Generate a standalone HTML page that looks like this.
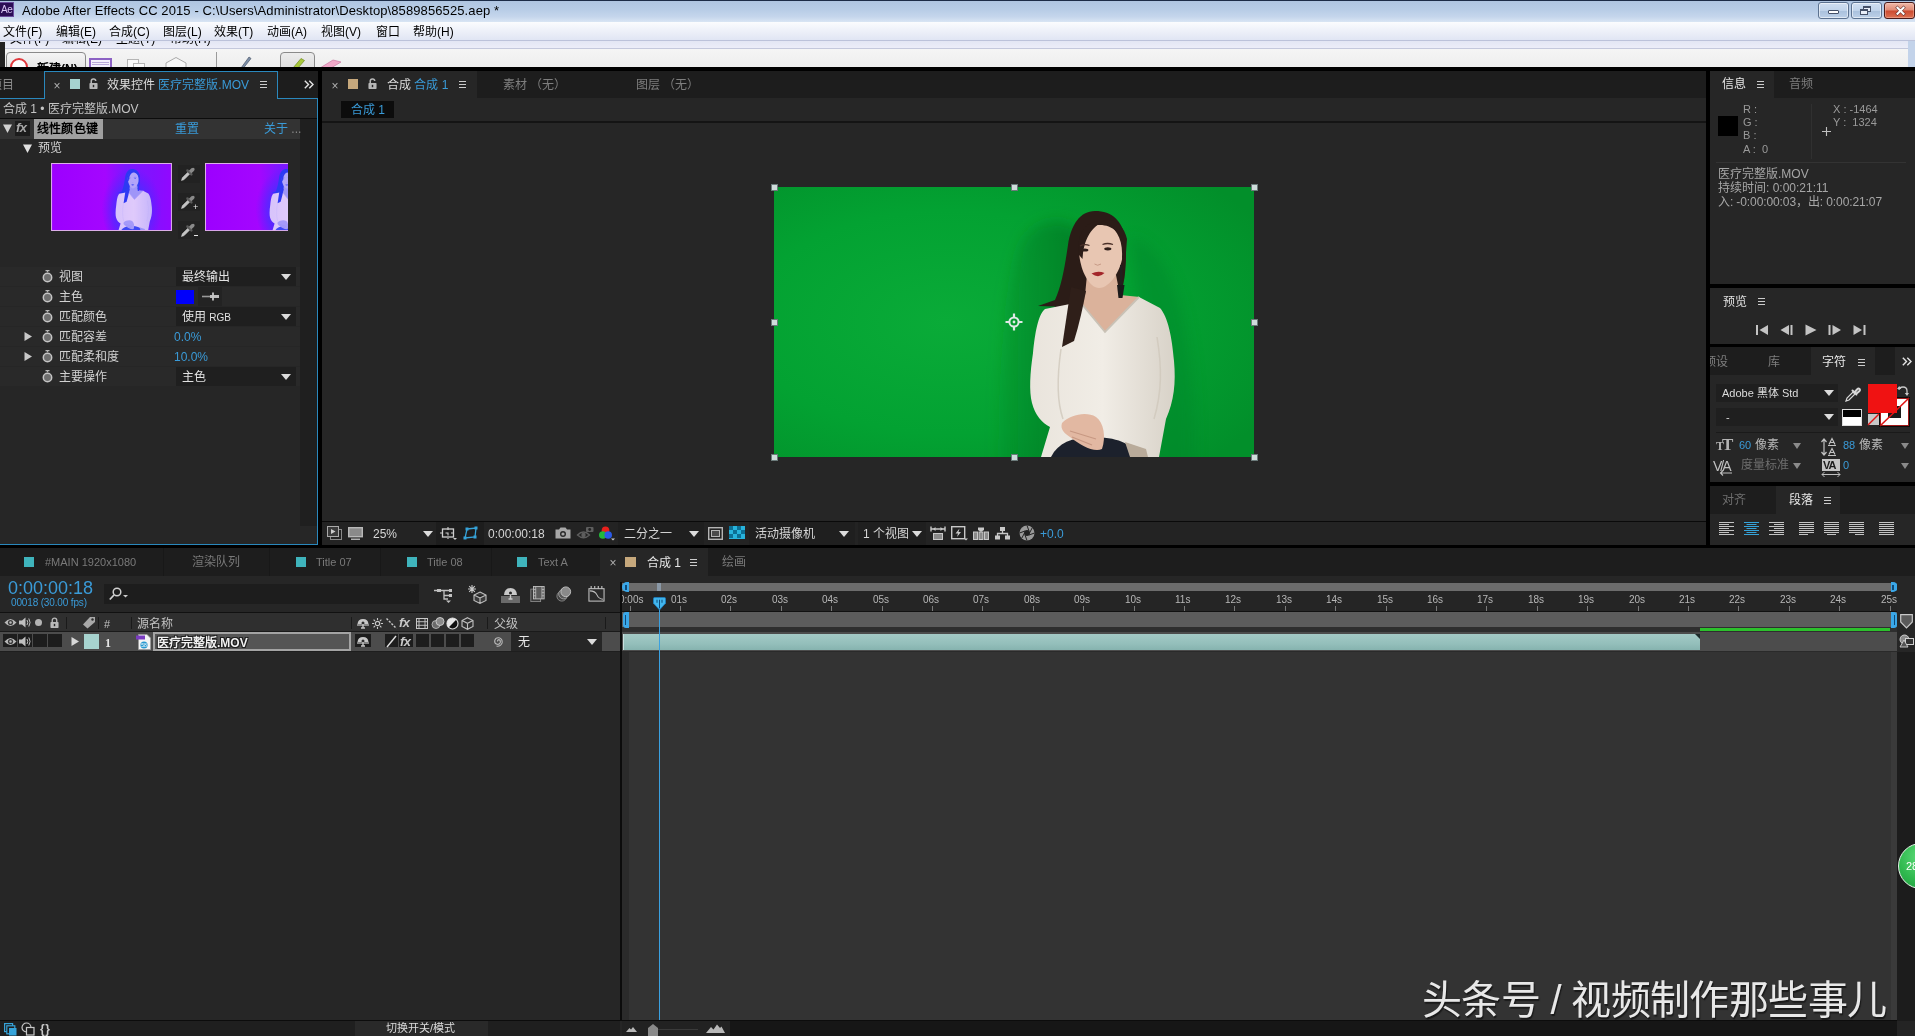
<!DOCTYPE html>
<html lang="zh-CN">
<head>
<meta charset="utf-8">
<title>AE</title>
<style>
*{box-sizing:border-box;margin:0;padding:0}
html,body{width:1915px;height:1036px;overflow:hidden;background:#000}
body{position:relative;will-change:transform;font-family:"Liberation Sans",sans-serif;font-size:12px;color:#c8c8c8;line-height:1}
.a{position:absolute}
.t{position:absolute;white-space:nowrap;line-height:14px;height:14px}
.blue{color:#2d8ceb}
.lb{color:#3d9bd8}
svg{position:absolute;overflow:visible}
/* ---------- window chrome ---------- */
#title{left:0;top:0;width:1915px;height:22px;background:linear-gradient(#afc5e1 0,#b7cce6 40%,#c5d6ec 75%,#d9e5f4 100%);border-top:1px solid #1c2c47}
#menu{left:0;top:22px;width:1915px;height:19px;background:linear-gradient(#fbfcfe 0,#eef1f9 45%,#dfe4f3 100%);color:#000}
#tool{left:0;top:41px;width:1915px;height:26px;background:#f0f0f0}
#menu .t{top:3px;color:#000;font-size:12px}
/* ---------- panels ---------- */
.panel{background:#262626}
.tabbar{background:#1d1d1d}
</style>
</head>
<body>
<!-- TITLE BAR -->
<div id="title" class="a"></div>
<div id="menu" class="a"></div>
<div id="tool" class="a"></div>

<!-- title contents -->
<div class="a" style="left:0;top:2px;width:14px;height:15px;background:#2b0e55;border:1px solid #6a4c9c;border-left:0"></div>
<div class="t" style="left:1px;top:3px;font-size:10px;color:#d9c8f5;letter-spacing:-0.5px;line-height:13px">Ae</div>
<div class="t" id="ttl" style="left:22px;top:3px;font-size:13px;color:#000;line-height:15px;letter-spacing:0.1px">Adobe After Effects CC 2015 - C:\Users\Administrator\Desktop\8589856525.aep *</div>
<!-- window buttons -->
<div class="a" style="left:1818px;top:2px;width:31px;height:17px;border:1px solid #5c7290;border-radius:3px;box-shadow:inset 0 0 0 1px rgba(255,255,255,.55);background:linear-gradient(#d0dff2 0,#c0d3ea 50%,#a9c0dc 51%,#bcd0e8 100%)"></div>
<div class="a" style="left:1828px;top:10px;width:11px;height:4px;background:#fff;border:1px solid #445068;border-radius:1px"></div>
<div class="a" style="left:1851px;top:2px;width:31px;height:17px;border:1px solid #5c7290;border-radius:3px;box-shadow:inset 0 0 0 1px rgba(255,255,255,.55);background:linear-gradient(#d0dff2 0,#c0d3ea 50%,#a9c0dc 51%,#bcd0e8 100%)"></div>
<div class="a" style="left:1863px;top:6px;width:8px;height:6px;border:1px solid #445068;border-top-width:2px;background:#e8eef8"></div>
<div class="a" style="left:1860px;top:9px;width:8px;height:6px;border:1px solid #445068;border-top-width:2px;background:#e8eef8"></div>
<div class="a" style="left:1884px;top:2px;width:31px;height:17px;border:1px solid #4a1a18;border-radius:3px;box-shadow:inset 0 0 0 1px rgba(255,220,210,.35);background:linear-gradient(#f0b8a8 0,#e08a74 48%,#cc4a30 52%,#dc7052 100%)"></div>
<svg style="left:1896px;top:7px" width="9" height="7.500" viewBox="0 0 12 10"><path d="M2 1 L10 9 M10 1 L2 9" stroke="#5a2a28" stroke-width="4.200" stroke-linecap="square"/><path d="M2 1 L10 9 M10 1 L2 9" stroke="#fff" stroke-width="2.800" stroke-linecap="square"/></svg>
<!-- menu -->
<div id="mi">
<div class="t" style="left:3px;top:25px;color:#000">文件(F)</div>
<div class="t" style="left:56px;top:25px;color:#000">编辑(E)</div>
<div class="t" style="left:109px;top:25px;color:#000">合成(C)</div>
<div class="t" style="left:163px;top:25px;color:#000">图层(L)</div>
<div class="t" style="left:214px;top:25px;color:#000">效果(T)</div>
<div class="t" style="left:267px;top:25px;color:#000">动画(A)</div>
<div class="t" style="left:321px;top:25px;color:#000">视图(V)</div>
<div class="t" style="left:376px;top:25px;color:#000">窗口</div>
<div class="t" style="left:413px;top:25px;color:#000">帮助(H)</div>
</div>
<!-- toolbar strip -->
<div class="a" style="left:0;top:40px;width:1915px;height:1px;background:#bcc2da"></div><div class="a" style="left:0;top:41px;width:1915px;height:7px;background:linear-gradient(#e3e6f4,#ecedf8)"></div>
<div class="a" style="left:0;top:48px;width:1915px;height:1px;background:#c4c8dc"></div>
<div class="a" style="left:0;top:49px;width:1915px;height:18px;background:linear-gradient(#f5f5f5,#eeeeee)"></div>
<div class="a" style="left:1908px;top:41px;width:7px;height:26px;background:#c3d3ea"></div>
<div class="a" style="left:0;top:42px;width:5px;height:25px;background:#222"></div>
<!-- clipped text remnants -->
<div class="a" style="left:0;top:41px;width:260px;height:5px;overflow:hidden"><div class="t" style="left:10px;top:-9px;color:#000">文件(F)</div><div class="t" style="left:62px;top:-9px;color:#000">编辑(E)</div><div class="t" style="left:116px;top:-9px;color:#000">主题(T)</div><div class="t" style="left:170px;top:-9px;color:#000">帮助(H)</div></div>
<div class="a" style="left:6px;top:52px;width:80px;height:20px;border:1px solid #8a8a8a;border-radius:4px;background:linear-gradient(#f4f4f4,#e2e2e2)"></div>
<div class="a" style="left:10px;top:58px;width:18px;height:18px;border:2px solid #e0393d;border-radius:50%;background:#fff"></div>
<div class="a" style="left:0;top:62px;width:90px;height:5px;overflow:hidden"><div class="t" style="left:37px;top:0px;color:#000;font-weight:bold">新建(N)</div></div>
<div class="a" style="left:89px;top:58px;width:23px;height:12px;border:2px solid #8c62c4;background:#f3f0fb"></div>
<div class="a" style="left:92px;top:62px;width:17px;height:1px;background:#b9a9d9"></div>
<div class="a" style="left:92px;top:64px;width:17px;height:1px;background:#b9a9d9"></div>
<div class="a" style="left:127px;top:59px;width:12px;height:10px;border:1px solid #b5b5b5;background:#fafafa"></div>
<div class="a" style="left:133px;top:63px;width:12px;height:10px;border:1px solid #b5b5b5;background:#fafafa"></div>
<svg style="left:165px;top:57px" width="22" height="12" viewBox="0 0 22 12"><path d="M1 11 L1 6 L11 0.5 L21 6 L21 11" fill="#f7f7f7" stroke="#aaa" stroke-width="1"/></svg>
<div class="a" style="left:216px;top:52px;width:1px;height:15px;background:#9a9a9a"></div>
<svg style="left:240px;top:56px" width="12" height="12" viewBox="0 0 12 12"><path d="M1 12 L9 1 L11 2.5 L3.5 12 Z" fill="#7d8fa8" stroke="#4a5668" stroke-width="0.7"/></svg>
<div class="a" style="left:280px;top:52px;width:35px;height:20px;border:1px solid #8a8a8a;border-radius:4px;background:linear-gradient(#ececec,#dcdcdc)"></div>
<svg style="left:292px;top:58px" width="14" height="10" viewBox="0 0 14 10"><path d="M1 10 L9 0.5 L12.5 2.5 L6 10 Z" fill="#a8c83c" stroke="#6e8a20" stroke-width="0.7"/></svg>
<svg style="left:319px;top:59px" width="24" height="9" viewBox="0 0 24 9"><path d="M1 9 L14 1 L22 3 L12 9 Z" fill="#f0a8c8" stroke="#c878a0" stroke-width="0.7"/></svg>
<div class="a" style="left:0;top:67px;width:1915px;height:3px;background:#000"></div>
<!--CHROME-->
<!-- LEFT PANEL (effect controls) -->
<div id="left" class="a panel" style="left:0;top:70px;width:318px;height:475px"></div>

<svg width="0" height="0" style="left:0;top:0"><defs>
<symbol id="sw" viewBox="0 0 11 13"><path d="M3.5 0.6 H7.5 M5.5 0.6 V2.2" stroke="#b4b4b4" stroke-width="1.2" fill="none"/><circle cx="5.5" cy="7.5" r="4.2" fill="#6e6e6e" stroke="#c4c4c4" stroke-width="1.5"/></symbol>
<symbol id="lock" viewBox="0 0 10 12"><path d="M2.5 6 V3.6 A2.5 2.5 0 0 1 7.5 3.2" fill="none" stroke="#b8b8b8" stroke-width="1.7"/><rect x="0.5" y="5.5" width="9" height="6.5" rx="0.8" fill="#b8b8b8"/><rect x="4.2" y="7.5" width="1.6" height="2.6" fill="#262626"/></symbol>
<symbol id="drop" viewBox="0 0 22 18"><rect width="22" height="18" fill="#222"/><path d="M3.500 15.500 L4.300 12.800 L10.200 6.900 L12 8.700 L6.100 14.600 Z" fill="#c4c4c4" stroke="#e0e0e0" stroke-width="0.500"/><path d="M9.400 5.400 L13.400 9.400" stroke="#5a5a5a" stroke-width="2.400" fill="none" stroke-linecap="round"/><path d="M11.600 6.400 L14 4 Q15.200 3.200 15.700 4 Q16 4.800 15 5.600 L12.800 7.600" fill="#808080" stroke="#8a8a8a" stroke-width="1.800" stroke-linejoin="round"/></symbol>
</defs></svg>
<!-- left panel frame -->
<div class="a tabbar" style="left:0;top:70px;width:318px;height:28px"></div>
<div class="a" style="left:0;top:98px;width:318px;height:447px;border:1px solid #2a88bd;border-left:0"></div>
<div class="a" style="left:44px;top:71px;width:234px;height:28px;background:#262626;border:1px solid #2a88bd;border-bottom:0"></div>
<div class="t" style="left:-10px;top:78px;color:#8a8a8a;font-size:12px">项目</div>
<div class="t" style="left:52px;top:79px;color:#b0b0b0;font-size:12px;width:10px;text-align:center">×</div>
<div class="a" style="left:70px;top:79px;width:10px;height:10px;background:#a6d3d0"></div>
<svg style="left:89px;top:78px" width="9" height="11"><use href="#lock"/></svg>
<div class="t" style="left:107px;top:78px;color:#dcdcdc">效果控件 <span style="color:#3a9bd8">医疗完整版.MOV</span></div>
<div class="a" style="left:260px;top:81px;width:7px;height:7px;border-top:1px solid #ccc;border-bottom:1px solid #ccc"></div><div class="a" style="left:260px;top:84px;width:7px;height:1px;background:#ccc"></div>
<svg style="left:304px;top:80px" width="10" height="9" viewBox="0 0 10 9"><path d="M0.8 0.8 L4.5 4.5 L0.8 8.2 M5.3 0.8 L9 4.5 L5.3 8.2" fill="none" stroke="#e4e4e4" stroke-width="1.4"/></svg>
<!-- breadcrumb -->
<div class="t" style="left:3px;top:102px;color:#c4c4c4">合成 1 • 医疗完整版.MOV</div>
<div class="a" style="left:0;top:118px;width:317px;height:1px;background:#0c0c0c"></div>
<!-- scrollbar column -->
<div class="a" style="left:300px;top:119px;width:17px;height:407px;background:#1f1f1f"></div>
<!-- effect row -->
<div class="a" style="left:0;top:119px;width:300px;height:20px;background:#333"></div>
<svg style="left:3px;top:124px" width="9" height="9" viewBox="0 0 9 9"><path d="M0 0.5 H9 L4.5 9 Z" fill="#d2d2d2"/></svg>
<div class="a" style="left:15px;top:121px;width:15px;height:15px;background:#1c1c1c"></div>
<div class="t" style="left:16px;top:121px;font-style:italic;font-weight:bold;font-size:13px;color:#a8a8a8;letter-spacing:-0.5px">fx</div>
<div class="a" style="left:34px;top:119px;width:69px;height:20px;background:#a0a0a0"></div>
<div class="t" style="left:37px;top:122px;color:#000;font-weight:bold;letter-spacing:0.2px">线性颜色键</div>
<div class="t" style="left:175px;top:122px;color:#3a9bd8">重置</div>
<div class="t" style="left:264px;top:122px;color:#3a9bd8">关于<span style="color:#888"> ...</span></div>
<!-- preview row -->
<svg style="left:23px;top:144px" width="9" height="9" viewBox="0 0 9 9"><path d="M0 0.5 H9 L4.5 9 Z" fill="#e0e0e0"/></svg>
<div class="t" style="left:38px;top:141px;color:#d6d6d6">预览</div>

<svg style="left:51px;top:163px;overflow:hidden" width="121" height="68" viewBox="0 0 480 270"><defs>
<filter id="purp" color-interpolation-filters="sRGB" x="0" y="0" width="1" height="1"><feColorMatrix type="matrix" values="0 0 0.86 0 0.1  0 0 0.7 0 0.16  0 0 0.04 0 0.95  0 0 0 1 0"/></filter>
<linearGradient id="pbg" x1="0" x2="1"><stop offset="0" stop-color="#9c00ff"/><stop offset="0.450" stop-color="#a406ff"/><stop offset="0.620" stop-color="#7a18ff"/><stop offset="0.850" stop-color="#8410ff"/><stop offset="1" stop-color="#9208ff"/></linearGradient>
<radialGradient id="pbl" cx="0.500" cy="0.550" r="0.500"><stop offset="0" stop-color="#3a34ff" stop-opacity="0.950"/><stop offset="0.600" stop-color="#4a2cff" stop-opacity="0.700"/><stop offset="1" stop-color="#5a20ff" stop-opacity="0"/></radialGradient>
<g id="thumb"><rect width="480" height="270" fill="url(#pbg)"/><ellipse cx="320" cy="170" rx="120" ry="170" fill="url(#pbl)"/><use href="#woman" filter="url(#purp)"/><rect x="2" y="2" width="476" height="266" fill="none" stroke="#dcaee8" stroke-width="4"/></g></defs><use href="#thumb"/></svg>
<svg style="left:205px;top:163px;overflow:hidden" width="83" height="68" viewBox="0 0 329.260 270" preserveAspectRatio="xMinYMin slice"><use href="#thumb"/></svg>

<svg style="left:178px;top:165px" width="22" height="18"><use href="#drop"/></svg>
<svg style="left:178px;top:193px" width="22" height="18"><use href="#drop"/></svg>
<svg style="left:178px;top:221px" width="22" height="18"><use href="#drop"/></svg>
<div class="t" style="left:193px;top:200px;font-size:9px;color:#e8e8e8">+</div>
<div class="a" style="left:194px;top:235px;width:4px;height:1px;background:#e8e8e8"></div>
<!-- property rows -->
<div class="a" style="left:0;top:267px;width:300px;height:19px;background:#292929"></div><svg style="left:42px;top:270px" width="11" height="13"><use href="#sw"/></svg><div class="t" style="left:59px;top:270px;color:#d2d2d2">视图</div><div class="a" style="left:176px;top:267px;width:120px;height:19px;background:#1f1f1f"></div><div class="t" style="left:182px;top:270px;color:#e2e2e2">最终输出</div><svg style="left:281px;top:274px" width="10" height="6" viewBox="0 0 10 6"><path d="M0 0 H10 L5 6 Z" fill="#dcdcdc"/></svg><div class="a" style="left:0;top:287px;width:300px;height:19px;background:#292929"></div><svg style="left:42px;top:290px" width="11" height="13"><use href="#sw"/></svg><div class="t" style="left:59px;top:290px;color:#d2d2d2">主色</div><div class="a" style="left:176px;top:290px;width:18px;height:14px;background:#0000fb"></div><div class="a" style="left:198px;top:287px;width:24px;height:19px;background:#232323"></div><svg style="left:202px;top:292px" width="18" height="9" viewBox="0 0 18 9"><path d="M0 4.5 H9" stroke="#9a9a9a" stroke-width="1.6"/><path d="M8 4.5 H17" stroke="#c0c0c0" stroke-width="3"/><path d="M11 0.5 V8.5" stroke="#c8c8c8" stroke-width="1.8"/></svg><div class="a" style="left:0;top:307px;width:300px;height:19px;background:#292929"></div><svg style="left:42px;top:310px" width="11" height="13"><use href="#sw"/></svg><div class="t" style="left:59px;top:310px;color:#d2d2d2">匹配颜色</div><div class="a" style="left:176px;top:307px;width:120px;height:19px;background:#1f1f1f"></div><div class="t" style="left:182px;top:310px;color:#e2e2e2">使用 <span style="font-size:10px">RGB</span></div><svg style="left:281px;top:314px" width="10" height="6" viewBox="0 0 10 6"><path d="M0 0 H10 L5 6 Z" fill="#dcdcdc"/></svg><div class="a" style="left:0;top:327px;width:300px;height:19px;background:#292929"></div><svg style="left:24px;top:332px" width="8" height="9" viewBox="0 0 8 9"><path d="M0.5 0 V9 L8 4.5 Z" fill="#c8c8c8"/></svg><svg style="left:42px;top:330px" width="11" height="13"><use href="#sw"/></svg><div class="t" style="left:59px;top:330px;color:#d2d2d2">匹配容差</div><div class="t" style="left:174px;top:330px;color:#3a9bd8">0.0%</div><div class="a" style="left:0;top:347px;width:300px;height:19px;background:#292929"></div><svg style="left:24px;top:352px" width="8" height="9" viewBox="0 0 8 9"><path d="M0.5 0 V9 L8 4.5 Z" fill="#c8c8c8"/></svg><svg style="left:42px;top:350px" width="11" height="13"><use href="#sw"/></svg><div class="t" style="left:59px;top:350px;color:#d2d2d2">匹配柔和度</div><div class="t" style="left:174px;top:350px;color:#3a9bd8">10.0%</div><div class="a" style="left:0;top:367px;width:300px;height:19px;background:#292929"></div><svg style="left:42px;top:370px" width="11" height="13"><use href="#sw"/></svg><div class="t" style="left:59px;top:370px;color:#d2d2d2">主要操作</div><div class="a" style="left:176px;top:367px;width:120px;height:19px;background:#1f1f1f"></div><div class="t" style="left:182px;top:370px;color:#e2e2e2">主色</div><svg style="left:281px;top:374px" width="10" height="6" viewBox="0 0 10 6"><path d="M0 0 H10 L5 6 Z" fill="#dcdcdc"/></svg>
<!--LEFT-->
<!-- CENTER (comp viewer) -->
<div id="center" class="a panel" style="left:322px;top:70px;width:1384px;height:475px"></div>

<svg width="0" height="0" style="left:0;top:0"><defs>
<filter id="bl" x="-0.3" y="-0.3" width="1.6" height="1.6"><feGaussianBlur stdDeviation="7"/></filter><radialGradient id="gbg" cx="0.36" cy="0.5" r="0.75"><stop offset="0" stop-color="#0aab38"/><stop offset="0.55" stop-color="#03a232"/><stop offset="1" stop-color="#028f2a"/></radialGradient>
<linearGradient id="gsh" x1="0" x2="1"><stop offset="0" stop-color="#007a24" stop-opacity="0.15"/><stop offset="0.35" stop-color="#007a24" stop-opacity="0.42"/><stop offset="1" stop-color="#006a20" stop-opacity="0.6"/></linearGradient>
<linearGradient id="gsw" x1="0" x2="1"><stop offset="0" stop-color="#e9e4dc"/><stop offset="0.5" stop-color="#f1ede6"/><stop offset="1" stop-color="#d8d2c8"/></linearGradient>
<g id="woman">
 <path d="M321 24 C306 24 297 38 294 58 C291 78 288 98 281 113 L264 119 L281 119.500 C285 135 286 150 288 160 L300 154 C305 138 308 122 310 108 L346 110 C352 92 353 70 351 52 C349 34 338 24 321 24Z" fill="#2b1c17"/>
 <path d="M313 88 L342 88 L346 108 L366 110 L331 146 L305 116 L311 108Z" fill="#dbb29b"/>
 <path d="M305 62 C305 46 314 38 326 38 C338 38 349 46 349 64 C349 80 337 101 325 101 C315 101 305 82 305 62Z" fill="#e8c6b2"/>
 <path d="M305 68 C302 46 312 33 329 34 C318 41 310 50 308.500 72Z" fill="#2b1c17"/>
 <path d="M329 34 C342 40 349 52 348 70 L350 92 L353 52 C350 38 340 30 329 34Z" fill="#2b1c17"/>
 <path d="M306 59 Q310.500 56.500 315.500 58.500 M328.500 57.500 Q333.500 55.500 339 57.500" stroke="#4a3028" stroke-width="1.300" fill="none"/>
 <ellipse cx="310.800" cy="63" rx="3.600" ry="1.600" fill="#2e1e1a"/><ellipse cx="333.800" cy="61.800" rx="3.600" ry="1.600" fill="#2e1e1a"/>
 <path d="M320.500 77 Q323.500 79.500 327 77" stroke="#c79a86" stroke-width="1" fill="none"/>
 <path d="M317.500 86.500 Q324 83.500 330.500 86 Q324.500 92 317.500 86.500Z" fill="#a3262a"/>
 <rect x="346" y="78" width="2.500" height="22" fill="#23201f"/><path d="M343 98 L350.500 98 L348.500 111 L344.500 111Z" fill="#1c1a1a"/>
 <path d="M271 122 C264 128 261 146 259 166 C256 186 255 204 258 216 C261 228 268 236 276 240 L267 270 L385 270 L392 232 C400 214 402 196 400 174 C398 150 394 130 386 121 L365 110 L331 145 L306 115 Z" fill="url(#gsw)"/>
 <path d="M306 115 L331 145 L365 110" fill="none" stroke="#c9c2b6" stroke-width="1.800"/>
 <path d="M287 162 C283 190 283 215 289 232 M383 150 C388 180 388 205 380 232" fill="none" stroke="#cfc8bc" stroke-width="1.500" opacity="0.800"/>
 <path d="M297 100 C294 120 291 140 288 160 L300 154 C305 138 309 120 312 104Z" fill="#2f1f19"/>
 <path d="M277 270 C284 256 298 250 318 250 C342 250 358 256 364 270Z" fill="#1c212c"/>
 <path d="M351 255 L372 262 L374 270 L356 270Z" fill="#b9ab9a"/>
 <path d="M288 236 C296 228 312 224 322 230 C330 236 332 250 328 262 C320 266 306 258 296 250 C290 246 286 242 288 236Z" fill="#e2b8a2"/>
 <path d="M296 244 L322 252 M298 250 L318 258" stroke="#c79883" stroke-width="1.200"/>
</g>
</defs></svg>
<!-- center frame -->
<div class="a tabbar" style="left:322px;top:70px;width:1384px;height:28px"></div>
<div class="a" style="left:322px;top:70px;width:155px;height:29px;background:#262626"></div>
<div class="t" style="left:330px;top:79px;color:#b0b0b0;width:10px;text-align:center">×</div>
<div class="a" style="left:348px;top:79px;width:10px;height:10px;background:#c6a87c"></div>
<svg style="left:368px;top:78px" width="9" height="11"><use href="#lock"/></svg>
<div class="t" style="left:387px;top:78px;color:#dcdcdc">合成 <span style="color:#3a9bd8">合成 1</span></div>
<div class="a" style="left:459px;top:81px;width:7px;height:7px;border-top:1px solid #ccc;border-bottom:1px solid #ccc"></div><div class="a" style="left:459px;top:84px;width:7px;height:1px;background:#ccc"></div>
<div class="t" style="left:503px;top:78px;color:#7e7e7e">素材 （无）</div>
<div class="t" style="left:636px;top:78px;color:#7e7e7e">图层 （无）</div>
<div class="a" style="left:341px;top:101px;width:53px;height:17px;background:#0c0c0c"></div>
<div class="t" style="left:351px;top:103px;color:#3a9bd8">合成 1</div>
<div class="a" style="left:322px;top:121px;width:1384px;height:2px;background:#141414"></div>
<!-- photo -->
<svg style="left:774px;top:187px;overflow:hidden" width="480" height="270" viewBox="0 0 480 270"><rect width="480" height="270" fill="url(#gbg)"/><path d="M224 290 C224 180 230 90 250 52 C262 32 290 28 306 44 L306 290Z" fill="url(#gsh)" filter="url(#bl)"/><path d="M356 50 C400 60 425 140 420 290 L380 290Z" fill="#00842a" opacity="0.45" filter="url(#bl)"/><use href="#woman"/></svg>
<!-- handles -->
<div class="a" style="left:771px;top:184px;width:7px;height:7px;background:#cfdcdb;border:1px solid #6b7a7a"></div><div class="a" style="left:1011px;top:184px;width:7px;height:7px;background:#cfdcdb;border:1px solid #6b7a7a"></div><div class="a" style="left:1251px;top:184px;width:7px;height:7px;background:#cfdcdb;border:1px solid #6b7a7a"></div><div class="a" style="left:771px;top:319px;width:7px;height:7px;background:#cfdcdb;border:1px solid #6b7a7a"></div><div class="a" style="left:1251px;top:319px;width:7px;height:7px;background:#cfdcdb;border:1px solid #6b7a7a"></div><div class="a" style="left:771px;top:454px;width:7px;height:7px;background:#cfdcdb;border:1px solid #6b7a7a"></div><div class="a" style="left:1011px;top:454px;width:7px;height:7px;background:#cfdcdb;border:1px solid #6b7a7a"></div><div class="a" style="left:1251px;top:454px;width:7px;height:7px;background:#cfdcdb;border:1px solid #6b7a7a"></div>
<svg style="left:1005px;top:313px" width="18" height="18" viewBox="0 0 18 18"><circle cx="9" cy="9" r="4.6" fill="none" stroke="#dfe9e6" stroke-width="2"/><path d="M9 0.5 V4 M9 14 V17.5 M0.5 9 H4 M14 9 H17.5" stroke="#dfe9e6" stroke-width="2.2"/><circle cx="9" cy="9" r="1.4" fill="#dfe9e6"/></svg>
<!-- viewer bottom bar -->
<div class="a" style="left:322px;top:521px;width:1384px;height:24px;background:#232323;border-top:1px solid #0a0a0a"></div>

<svg style="left:327px;top:526px" width="15" height="14" viewBox="0 0 15 14"><rect x="3.500" y="3.500" width="11" height="10" fill="#222" stroke="#8a8a8a"/><rect x="0.500" y="0.500" width="11" height="10" fill="#3a3a3a" stroke="#aaa"/><path d="M4 3 V8 L8.500 5.500Z" fill="#ccc"/></svg>
<svg style="left:348px;top:527px" width="15" height="13" viewBox="0 0 15 13"><rect x="0.700" y="0.700" width="13.600" height="9" fill="#8a8a8a" stroke="#b8b8b8" stroke-width="1.400"/><rect x="3" y="11.500" width="9" height="1.500" fill="#b0b0b0"/></svg>
<div class="t" style="left:373px;top:527px;color:#d6d6d6">25%</div>
<svg style="left:423px;top:531px" width="10" height="6" viewBox="0 0 10 6"><path d="M0 0 H10 L5 6 Z" fill="#dcdcdc"/></svg>
<div class="a" style="left:436px;top:522px;width:48px;height:23px;background:#1d1d1d"></div>
<svg style="left:440px;top:527px" width="17" height="13" viewBox="0 0 17 13"><rect x="2.500" y="2" width="11" height="8" fill="none" stroke="#d0d0d0" stroke-width="1.300"/><path d="M8 0 V12 M0 6 H16" stroke="#d0d0d0" stroke-width="1.100" stroke-dasharray="3 2.500"/><path d="M13 11 H17 L15 13Z" fill="#ccc"/></svg>
<svg style="left:463px;top:526px" width="16" height="15" viewBox="0 0 16 15"><path d="M4 3 L13 2 L12 11 L2 12Z" fill="none" stroke="#36a3d9" stroke-width="1.300"/><rect x="2.500" y="1.500" width="3" height="3" fill="#36a3d9"/><rect x="11.500" y="0.500" width="3" height="3" fill="#36a3d9"/><rect x="10.500" y="9.500" width="3" height="3" fill="#36a3d9"/><rect x="0.500" y="10.500" width="3" height="3" fill="#36a3d9"/></svg>
<div class="t" style="left:488px;top:527px;color:#d6d6d6">0:00:00:18</div>
<svg style="left:555px;top:527px" width="16" height="12" viewBox="0 0 16 12"><path d="M0.500 2.500 H4 L5.500 0.500 H10.500 L12 2.500 H15.500 V11.500 H0.500Z" fill="#a8a8a8"/><circle cx="8" cy="7" r="3" fill="#2a2a2a"/><circle cx="8" cy="7" r="1.600" fill="#a8a8a8"/></svg>
<svg style="left:577px;top:525px" width="17" height="16" viewBox="0 0 17 16"><path d="M0.500 10 Q6.500 4 12.500 10 Q6.500 15.500 0.500 10Z" fill="none" stroke="#5e5e5e" stroke-width="1.400"/><circle cx="6.500" cy="10" r="2.200" fill="#5e5e5e"/><rect x="9" y="2" width="7.500" height="5" rx="1" fill="#5e5e5e"/><circle cx="12.700" cy="4.500" r="1.400" fill="#222"/></svg>
<svg style="left:599px;top:526px" width="16" height="15" viewBox="0 0 16 15"><circle cx="6.500" cy="4.200" r="3.800" fill="#e8201c"/><circle cx="3.800" cy="9" r="3.800" fill="#22b83a"/><circle cx="9.200" cy="9" r="3.800" fill="#2a5ae8"/><path d="M12 12.500 H16 L14 14.500Z" fill="#ccc"/></svg>
<div class="a" style="left:618px;top:522px;width:86px;height:23px;background:#1f1f1f"></div>
<div class="t" style="left:624px;top:527px;color:#d6d6d6">二分之一</div>
<svg style="left:689px;top:531px" width="10" height="6" viewBox="0 0 10 6"><path d="M0 0 H10 L5 6 Z" fill="#dcdcdc"/></svg>
<svg style="left:708px;top:527px" width="15" height="13" viewBox="0 0 15 13"><rect x="0.700" y="0.700" width="13.600" height="11.600" fill="none" stroke="#b4b4b4" stroke-width="1.400"/><rect x="3.500" y="3.500" width="8" height="6" fill="#4a4a4a" stroke="#b4b4b4"/></svg>
<svg style="left:729px;top:526px" width="16" height="13" viewBox="0 0 16 13"><rect width="16" height="13" fill="#27b3dc"/><g fill="#0c6f94"><rect x="0" y="0" width="4" height="4"/><rect x="8" y="0" width="4" height="4"/><rect x="4" y="4" width="4" height="4"/><rect x="12" y="4" width="4" height="4"/><rect x="0" y="8" width="4" height="4"/><rect x="8" y="8" width="4" height="4"/></g></svg>
<div class="a" style="left:749px;top:522px;width:106px;height:23px;background:#1f1f1f"></div>
<div class="t" style="left:755px;top:527px;color:#d6d6d6">活动摄像机</div>
<svg style="left:839px;top:531px" width="10" height="6" viewBox="0 0 10 6"><path d="M0 0 H10 L5 6 Z" fill="#dcdcdc"/></svg>
<div class="a" style="left:858px;top:522px;width:68px;height:23px;background:#1f1f1f"></div>
<div class="t" style="left:863px;top:527px;color:#d6d6d6">1 个视图</div>
<svg style="left:912px;top:531px" width="10" height="6" viewBox="0 0 10 6"><path d="M0 0 H10 L5 6 Z" fill="#dcdcdc"/></svg>
<svg style="left:930px;top:526px" width="16" height="14" viewBox="0 0 16 14"><path d="M1 3 H15 M1 0.500 V5.500 M15 0.500 V5.500" stroke="#c8c8c8" stroke-width="1.400" fill="none"/><path d="M3 3 L5.500 1 V5Z M13 3 L10.500 1 V5Z" fill="#c8c8c8"/><rect x="3.500" y="7.500" width="9" height="6" fill="#8a8a8a" stroke="#c8c8c8"/></svg>
<svg style="left:951px;top:526px" width="17" height="15" viewBox="0 0 17 15"><rect x="0.700" y="0.700" width="13" height="12" fill="none" stroke="#c8c8c8" stroke-width="1.400"/><path d="M8.500 2.500 L4.500 7.500 H7 L6 11 L10 6 H7.500Z" fill="#c8c8c8"/><path d="M13 12.500 H17 L15 14.500Z" fill="#ccc"/></svg>
<svg style="left:973px;top:527px" width="16" height="13" viewBox="0 0 16 13"><path d="M5 0.500 H11 V3 L8 5 L5 3Z" fill="#c8c8c8"/><rect x="0.500" y="5" width="4" height="7.500" fill="#8a8a8a" stroke="#c8c8c8"/><rect x="6" y="5" width="4" height="7.500" fill="#8a8a8a" stroke="#c8c8c8"/><rect x="11.500" y="5" width="4" height="7.500" fill="#8a8a8a" stroke="#c8c8c8"/></svg>
<svg style="left:995px;top:527px" width="15" height="13" viewBox="0 0 15 13"><rect x="5" y="0" width="5" height="4" fill="#c8c8c8"/><path d="M7.500 4 V6.500 M2.500 9 V6.500 H12.500 V9" stroke="#c8c8c8" stroke-width="1.300" fill="none"/><rect x="0" y="8.500" width="5" height="4" fill="#c8c8c8"/><rect x="10" y="8.500" width="5" height="4" fill="#c8c8c8"/></svg>
<svg style="left:1019px;top:525px" width="16" height="16" viewBox="0 0 16 16"><circle cx="8" cy="8" r="7.500" fill="#9a9a9a"/><circle cx="8" cy="8" r="3" fill="#222"/><path d="M8 0.500 L10 6 M15.500 8 L10 10 M8 15.500 L6 10 M0.500 8 L6 6 M13.300 2.700 L10.500 8 M2.700 13.300 L5.500 8" stroke="#222" stroke-width="1"/></svg>
<div class="t" style="left:1040px;top:527px;color:#3a9bd8">+0.0</div>

<!--CENTER-->
<!-- RIGHT -->
<div id="right" class="a" style="left:1710px;top:70px;width:205px;height:475px;background:#000"></div>

<!-- INFO -->
<div class="a panel" style="left:1710px;top:70px;width:205px;height:214px"></div>
<div class="a tabbar" style="left:1774px;top:70px;width:141px;height:28px"></div>
<div class="t" style="left:1722px;top:77px;color:#e6e6e6">信息</div><div class="a" style="left:1757px;top:81px;width:7px;height:7px;border-top:1px solid #ccc;border-bottom:1px solid #ccc"></div><div class="a" style="left:1757px;top:84px;width:7px;height:1px;background:#ccc"></div>
<div class="t" style="left:1789px;top:77px;color:#7e7e7e">音频</div>
<div class="a" style="left:1718px;top:116px;width:20px;height:20px;background:#000"></div>
<div class="t" style="left:1743px;top:102px;color:#9a9a9a;font-size:11px">R :</div>
<div class="t" style="left:1743px;top:115px;color:#9a9a9a;font-size:11px">G :</div>
<div class="t" style="left:1743px;top:128px;color:#9a9a9a;font-size:11px">B :</div>
<div class="t" style="left:1743px;top:142px;color:#9a9a9a;font-size:11px">A :&nbsp; 0</div>
<div class="a" style="left:1811px;top:104px;width:1px;height:55px;background:#303030"></div>
<div class="t" style="left:1833px;top:102px;color:#9a9a9a;font-size:11px">X : -1464</div>
<div class="t" style="left:1833px;top:115px;color:#9a9a9a;font-size:11px">Y :&nbsp; 1324</div>
<svg style="left:1822px;top:127px" width="9" height="9" viewBox="0 0 9 9"><path d="M4.500 0 V9 M0 4.500 H9" stroke="#c0c0c0" stroke-width="1.100"/></svg>
<div class="a" style="left:1716px;top:162px;width:190px;height:1px;background:#333"></div>
<div class="t" style="left:1718px;top:167px;color:#a6a6a6">医疗完整版.MOV</div>
<div class="t" style="left:1718px;top:181px;color:#a6a6a6">持续时间: 0:00:21:11</div>
<div class="t" style="left:1718px;top:195px;color:#a6a6a6;letter-spacing:-0.1px">入: -0:00:00:03，出: 0:00:21:07</div>
<!-- PREVIEW -->
<div class="a panel" style="left:1710px;top:288px;width:205px;height:56px"></div>
<div class="t" style="left:1723px;top:295px;color:#e0e0e0">预览</div><div class="a" style="left:1758px;top:298px;width:7px;height:7px;border-top:1px solid #ccc;border-bottom:1px solid #ccc"></div><div class="a" style="left:1758px;top:301px;width:7px;height:1px;background:#ccc"></div>
<svg style="left:1756px;top:324px" width="112" height="12" viewBox="0 0 112 12"><g fill="#c4c4c4">
<rect x="0" y="1" width="2" height="10"/><path d="M12 1 V11 L3.500 6Z"/>
<path d="M33 1 V11 L24.500 6Z"/><rect x="34.500" y="1" width="2" height="10"/>
<path d="M49.500 0.500 V11.500 L60.500 6Z"/>
<rect x="72.500" y="1" width="2" height="10"/><path d="M76.500 1 V11 L85 6Z"/>
<path d="M97.500 1 V11 L106 6Z"/><rect x="107.500" y="1" width="2" height="10"/>
</g></svg>
<!-- CHARACTER -->
<div class="a panel" style="left:1710px;top:347px;width:205px;height:135px"></div>
<div class="a tabbar" style="left:1710px;top:347px;width:101px;height:28px"></div>
<div class="a tabbar" style="left:1875px;top:347px;width:40px;height:28px"></div>
<div class="a" style="left:1895px;top:347px;width:20px;height:28px;background:#262626"></div>
<div class="a" style="left:1710px;top:347px;width:40px;height:28px;overflow:hidden"><div class="t" style="left:-6px;top:8px;color:#7e7e7e">预设</div></div>
<div class="t" style="left:1768px;top:355px;color:#7e7e7e">库</div>
<div class="t" style="left:1822px;top:355px;color:#e6e6e6">字符</div><div class="a" style="left:1858px;top:359px;width:7px;height:7px;border-top:1px solid #ccc;border-bottom:1px solid #ccc"></div><div class="a" style="left:1858px;top:362px;width:7px;height:1px;background:#ccc"></div>
<svg style="left:1902px;top:357px" width="10" height="9" viewBox="0 0 10 9"><path d="M0.800 0.800 L4.500 4.500 L0.800 8.200 M5.300 0.800 L9 4.500 L5.300 8.200" fill="none" stroke="#e4e4e4" stroke-width="1.400"/></svg>
<div class="a" style="left:1716px;top:384px;width:122px;height:18px;background:#1f1f1f"></div>
<div class="t" style="left:1722px;top:386px;color:#dcdcdc;font-size:11px">Adobe 黑体 Std</div><svg style="left:1824px;top:390px" width="10" height="6" viewBox="0 0 10 6"><path d="M0 0 H10 L5.0 6 Z" fill="#dcdcdc"/></svg>
<div class="a" style="left:1716px;top:408px;width:122px;height:18px;background:#1f1f1f"></div>
<div class="t" style="left:1726px;top:410px;color:#dcdcdc;font-size:11px">-</div><svg style="left:1824px;top:414px" width="10" height="6" viewBox="0 0 10 6"><path d="M0 0 H10 L5.0 6 Z" fill="#dcdcdc"/></svg>
<svg style="left:1845px;top:386px" width="16" height="16" viewBox="0 0 16 16"><path d="M1 15 L2 12 L8 6 L10 8 L4 14Z" fill="none" stroke="#d8d8d8" stroke-width="1.200"/><path d="M7.500 4.500 L11.500 8.500 M9.500 6.500 L12 3.500 Q13.500 2 14.500 3 Q15.500 4.200 14 5.500 L11 8" stroke="#d8d8d8" stroke-width="2" fill="none" stroke-linecap="round"/></svg>
<div class="a" style="left:1842px;top:409px;width:20px;height:17px;background:#fff;border:1px solid #ddd"></div>
<div class="a" style="left:1843px;top:410px;width:18px;height:7px;background:#000"></div>
<div class="a" style="left:1879px;top:397px;width:31px;height:30px;background:#fff;border:1px solid #0a0a0a"></div>
<div class="a" style="left:1888px;top:406px;width:13px;height:12px;background:#1a1a1a"></div>
<svg style="left:1880px;top:398px" width="29" height="28" viewBox="0 0 29 28"><path d="M0 28 L29 0" stroke="#e01414" stroke-width="1.600"/><rect x="0.500" y="0.500" width="28" height="27" fill="none" stroke="#a01818" stroke-width="1"/></svg>
<div class="a" style="left:1868px;top:384px;width:29px;height:29px;background:#f01212"></div>
<div class="a" style="left:1868px;top:414px;width:11px;height:11px;background:#c8c8c8"></div>
<svg style="left:1868px;top:414px" width="11" height="11" viewBox="0 0 11 11"><path d="M0 11 L11 0" stroke="#e01414" stroke-width="1.400"/></svg>
<svg style="left:1897px;top:385px" width="12" height="12" viewBox="0 0 12 12"><path d="M2 5 Q2 2 6 2 Q10 2 10 6 V9" fill="none" stroke="#c8c8c8" stroke-width="1.300"/><path d="M0 4 L2.200 1 L4.400 4Z M7.800 8 L10 11 L12 8Z" fill="#c8c8c8"/></svg>
<div class="a" style="left:1716px;top:432px;width:194px;height:1px;background:#1a1a1a"></div>
<div class="t" style="left:1716px;top:437px;color:#b4b4b4;font-family:'Liberation Serif',serif;font-weight:bold;font-size:17px;line-height:16px;letter-spacing:-2px"><span style="font-size:12px">T</span>T</div>
<div class="t" style="left:1739px;top:438px;color:#b8b8b8"><span style="color:#3a9bd8;font-size:11px">60</span> 像素</div><svg style="left:1793px;top:443px" width="8" height="6" viewBox="0 0 8 6"><path d="M0 0 H8 L4.0 6 Z" fill="#8a8a8a"/></svg>
<svg style="left:1820px;top:438px" width="17" height="18" viewBox="0 0 17 18"><path d="M4 1 V17 M1.500 4 L4 1 L6.500 4 M1.500 14 L4 17 L6.500 14" fill="none" stroke="#c0c0c0" stroke-width="1.200"/><path d="M9 6.500 L12 0.500 L15 6.500 M10 4.500 H14" fill="none" stroke="#c0c0c0" stroke-width="1.200"/><path d="M8 7.500 H16" stroke="#c0c0c0"/><path d="M9 16.500 L12 10.500 L15 16.500 M10 14.500 H14" fill="none" stroke="#c0c0c0" stroke-width="1.200"/><path d="M8 17.500 H16" stroke="#c0c0c0"/></svg>
<div class="t" style="left:1843px;top:438px;color:#b8b8b8"><span style="color:#3a9bd8;font-size:11px">88</span> 像素</div><svg style="left:1901px;top:443px" width="8" height="6" viewBox="0 0 8 6"><path d="M0 0 H8 L4.0 6 Z" fill="#8a8a8a"/></svg>
<div class="t" style="left:1713px;top:458px;color:#c0c0c0;font-size:14px;line-height:16px;letter-spacing:-2px">V/A</div>
<svg style="left:1720px;top:470px" width="12" height="6" viewBox="0 0 12 6"><path d="M0 3 H12 M3 0.500 L0.500 3 L3 5.500" fill="none" stroke="#c0c0c0" stroke-width="1.100"/></svg>
<div class="t" style="left:1741px;top:458px;color:#6e6e6e">度量标准</div><svg style="left:1793px;top:463px" width="8" height="6" viewBox="0 0 8 6"><path d="M0 0 H8 L4.0 6 Z" fill="#8a8a8a"/></svg>
<div class="a" style="left:1822px;top:459px;width:18px;height:12px;background:#c4c4c4"></div>
<div class="t" style="left:1823px;top:458px;color:#1a1a1a;font-size:11px;font-weight:bold;letter-spacing:-1px">VA</div>
<svg style="left:1822px;top:472px" width="18" height="5" viewBox="0 0 18 5"><path d="M0 2.500 H18 M2.500 0 L0 2.500 L2.500 5 M15.500 0 L18 2.500 L15.500 5" fill="none" stroke="#c0c0c0" stroke-width="1"/></svg>
<div class="t" style="left:1843px;top:458px;color:#3a9bd8;font-size:11px">0</div><svg style="left:1901px;top:463px" width="8" height="6" viewBox="0 0 8 6"><path d="M0 0 H8 L4.0 6 Z" fill="#8a8a8a"/></svg>
<!-- PARAGRAPH -->
<div class="a panel" style="left:1710px;top:486px;width:205px;height:59px"></div>
<div class="a tabbar" style="left:1710px;top:486px;width:66px;height:28px"></div>
<div class="a tabbar" style="left:1840px;top:486px;width:75px;height:28px"></div>
<div class="t" style="left:1722px;top:493px;color:#6e6e6e">对齐</div>
<div class="t" style="left:1789px;top:493px;color:#e6e6e6">段落</div><div class="a" style="left:1824px;top:497px;width:7px;height:7px;border-top:1px solid #ccc;border-bottom:1px solid #ccc"></div><div class="a" style="left:1824px;top:500px;width:7px;height:1px;background:#ccc"></div>
<svg style="left:1719px;top:521px" width="15" height="15" viewBox="0 0 15 15"><g fill="#c4c4c4"><rect x="0" y="1" width="15" height="1"/><rect x="0" y="3" width="10" height="1"/><rect x="0" y="5" width="15" height="1"/><rect x="0" y="7" width="10" height="1"/><rect x="0" y="9" width="15" height="1"/><rect x="0" y="11" width="10" height="1"/><rect x="0" y="13" width="15" height="1"/></g></svg><svg style="left:1744px;top:521px" width="15" height="15" viewBox="0 0 15 15"><g fill="#36a3d9"><rect x="0" y="1" width="15" height="1"/><rect x="2.5" y="3" width="10" height="1"/><rect x="0" y="5" width="15" height="1"/><rect x="2.5" y="7" width="10" height="1"/><rect x="0" y="9" width="15" height="1"/><rect x="2.5" y="11" width="10" height="1"/><rect x="0" y="13" width="15" height="1"/></g></svg><svg style="left:1769px;top:521px" width="15" height="15" viewBox="0 0 15 15"><g fill="#c4c4c4"><rect x="0" y="1" width="15" height="1"/><rect x="5" y="3" width="10" height="1"/><rect x="0" y="5" width="15" height="1"/><rect x="5" y="7" width="10" height="1"/><rect x="0" y="9" width="15" height="1"/><rect x="5" y="11" width="10" height="1"/><rect x="0" y="13" width="15" height="1"/></g></svg><svg style="left:1799px;top:521px" width="15" height="15" viewBox="0 0 15 15"><g fill="#c4c4c4"><rect x="0" y="1" width="15" height="1"/><rect x="0" y="3" width="15" height="1"/><rect x="0" y="5" width="15" height="1"/><rect x="0" y="7" width="15" height="1"/><rect x="0" y="9" width="15" height="1"/><rect x="0" y="11" width="15" height="1"/><rect x="0" y="13" width="9" height="1"/></g></svg><svg style="left:1824px;top:521px" width="15" height="15" viewBox="0 0 15 15"><g fill="#c4c4c4"><rect x="0" y="1" width="15" height="1"/><rect x="0" y="3" width="15" height="1"/><rect x="0" y="5" width="15" height="1"/><rect x="0" y="7" width="15" height="1"/><rect x="0" y="9" width="15" height="1"/><rect x="0" y="11" width="15" height="1"/><rect x="3" y="13" width="9" height="1"/></g></svg><svg style="left:1849px;top:521px" width="15" height="15" viewBox="0 0 15 15"><g fill="#c4c4c4"><rect x="0" y="1" width="15" height="1"/><rect x="0" y="3" width="15" height="1"/><rect x="0" y="5" width="15" height="1"/><rect x="0" y="7" width="15" height="1"/><rect x="0" y="9" width="15" height="1"/><rect x="0" y="11" width="15" height="1"/><rect x="6" y="13" width="9" height="1"/></g></svg><svg style="left:1879px;top:521px" width="15" height="15" viewBox="0 0 15 15"><g fill="#c4c4c4"><rect x="0" y="1" width="15" height="1"/><rect x="0" y="3" width="15" height="1"/><rect x="0" y="5" width="15" height="1"/><rect x="0" y="7" width="15" height="1"/><rect x="0" y="9" width="15" height="1"/><rect x="0" y="11" width="15" height="1"/><rect x="0" y="13" width="15" height="1"/></g></svg><!--RIGHT-->
<!-- TIMELINE -->
<div id="tl" class="a panel" style="left:0;top:548px;width:1915px;height:488px"></div>

<svg width="0" height="0" style="left:0;top:0"><defs>
<symbol id="eye" viewBox="0 0 13 9"><path d="M0.500 4.500 Q6.500 -2.500 12.500 4.500 Q6.500 11.500 0.500 4.500Z" fill="#b8b8b8"/><circle cx="6.500" cy="4.500" r="2.600" fill="#3a3a3a"/><circle cx="6.500" cy="4.500" r="1.200" fill="#b8b8b8"/></symbol>
<symbol id="spk" viewBox="0 0 12 11"><path d="M0 3.500 H3 L6.500 0.500 V10.500 L3 7.500 H0Z" fill="#c0c0c0"/><path d="M8 3 Q9.500 5.500 8 8 M9.800 1.500 Q12.300 5.500 9.800 9.500" fill="none" stroke="#c0c0c0" stroke-width="1"/></symbol>
<symbol id="shy" viewBox="0 0 12 11"><path d="M0.500 6 Q1 1 6 1 Q11 1 11.500 6Z" fill="#c8c8c8"/><path d="M0 7 H12" stroke="#c8c8c8" stroke-width="1.200"/><circle cx="6" cy="5" r="1.500" fill="#2d2d2d"/><path d="M6 6 V10 M4 10 H8" stroke="#c8c8c8" stroke-width="1.400"/></symbol>
</defs></svg>
<!-- timeline tabbar -->
<div class="a tabbar" style="left:0;top:548px;width:1915px;height:28px"></div>
<div class="a" style="left:600px;top:548px;width:108px;height:29px;background:#262626"></div>
<div class="a" style="left:163px;top:548px;width:1px;height:28px;background:#181818"></div>
<div class="a" style="left:269px;top:548px;width:1px;height:28px;background:#181818"></div>
<div class="a" style="left:380px;top:548px;width:1px;height:28px;background:#181818"></div>
<div class="a" style="left:491px;top:548px;width:1px;height:28px;background:#181818"></div>
<div class="a" style="left:24px;top:557px;width:10px;height:10px;background:#3fb4bc"></div>
<div class="t" style="left:45px;top:555px;color:#7a7a7a;font-size:11px">#MAIN 1920x1080</div>
<div class="t" style="left:192px;top:555px;color:#7a7a7a">渲染队列</div>
<div class="a" style="left:296px;top:557px;width:10px;height:10px;background:#3fb4bc"></div>
<div class="t" style="left:316px;top:555px;color:#7a7a7a;font-size:11px">Title 07</div>
<div class="a" style="left:407px;top:557px;width:10px;height:10px;background:#3fb4bc"></div>
<div class="t" style="left:427px;top:555px;color:#7a7a7a;font-size:11px">Title 08</div>
<div class="a" style="left:517px;top:557px;width:10px;height:10px;background:#3fb4bc"></div>
<div class="t" style="left:538px;top:555px;color:#7a7a7a;font-size:11px">Text A</div>
<div class="t" style="left:608px;top:556px;color:#b0b0b0;width:10px;text-align:center">×</div>
<div class="a" style="left:625px;top:557px;width:11px;height:10px;background:#c6a87c"></div>
<div class="t" style="left:647px;top:556px;color:#e6e6e6">合成 1</div><div class="a" style="left:690px;top:559px;width:7px;height:7px;border-top:1px solid #ccc;border-bottom:1px solid #ccc"></div><div class="a" style="left:690px;top:562px;width:7px;height:1px;background:#ccc"></div>
<div class="t" style="left:722px;top:555px;color:#7a7a7a">绘画</div>
<!-- time row -->
<div class="t" style="left:8px;top:579px;color:#3a9bd8;font-size:18px;line-height:18px;height:18px;letter-spacing:0px">0:00:00:18</div>
<div class="t" style="left:11px;top:596px;color:#3a9bd8;font-size:10px;line-height:12px;letter-spacing:-0.15px;margin-top:1px">00018 (30.00 fps)</div>
<div class="a" style="left:104px;top:584px;width:315px;height:20px;background:#1d1d1d"></div>
<svg style="left:109px;top:587px" width="20" height="14" viewBox="0 0 20 14"><circle cx="8" cy="5" r="3.800" fill="none" stroke="#d0d0d0" stroke-width="1.500"/><path d="M5 8 L0.800 12.500" stroke="#d0d0d0" stroke-width="1.800"/><path d="M14 8 H19 L16.500 10.500Z" fill="#ccc"/></svg>

<svg style="left:434px;top:587px" width="19" height="16" viewBox="0 0 19 16"><path d="M0 3.500 H7 M7 3.500 H17 M10 3.500 V8.500 H17 M10 8.500 V12 H14" fill="none" stroke="#c0c0c0" stroke-width="1.300"/><rect x="3" y="2" width="4" height="3" fill="#c0c0c0"/><rect x="15" y="2" width="3" height="3" fill="#c0c0c0"/><rect x="15" y="7" width="3" height="3" fill="#c0c0c0"/><path d="M12 13.500 H17 L14.500 16Z" fill="#c0c0c0"/></svg>
<svg style="left:468px;top:585px" width="19" height="19" viewBox="0 0 19 19"><path d="M4 0 V8 M0 4 H8 M1.200 1.200 L6.800 6.800 M6.800 1.200 L1.200 6.800" stroke="#c8c8c8" stroke-width="1.100"/><path d="M12 7 L18 10 V15.500 L12 18.500 L6 15.500 V10Z M6 10 L12 13 L18 10 M12 13 V18.500" fill="#3a3a3a" stroke="#c0c0c0" stroke-width="1.100"/></svg>
<svg style="left:501px;top:586px" width="19" height="17" viewBox="0 0 19 17"><rect x="0" y="10" width="19" height="7" fill="#6a6a6a"/><path d="M3 9 Q3.500 2 9.500 2 Q15.500 2 16 9Z" fill="#c8c8c8"/><circle cx="9.500" cy="7" r="1.500" fill="#222"/><path d="M9.500 8.500 V13 M7.500 13 H11.500" stroke="#c8c8c8" stroke-width="1.400"/></svg>
<svg style="left:530px;top:586px" width="15" height="16" viewBox="0 0 16 18"><rect x="0.500" y="3.500" width="11" height="14" fill="#3a3a3a" stroke="#8a8a8a"/><rect x="3.500" y="0.500" width="12" height="14" fill="#5a5a5a" stroke="#c0c0c0"/><path d="M6 0.500 V14.500 M13 0.500 V14.500 M3.500 4 H6 M3.500 7.500 H6 M3.500 11 H6 M13 4 H15.500 M13 7.500 H15.500 M13 11 H15.500" stroke="#c0c0c0" stroke-width="0.900"/></svg>
<svg style="left:556px;top:586px" width="16" height="16" viewBox="0 0 17 18"><circle cx="6" cy="11.500" r="5.500" fill="#3e3e3e" stroke="#8a8a8a"/><circle cx="8" cy="9" r="5.500" fill="#5a5a5a" stroke="#a0a0a0"/><circle cx="10.500" cy="6.500" r="5.500" fill="#8a8a8a" stroke="#c4c4c4"/></svg>
<svg style="left:588px;top:586px" width="17" height="16" viewBox="0 0 19 18"><rect x="1" y="3" width="17" height="14" fill="#2a2a2a" stroke="#c0c0c0" stroke-width="1.200"/><path d="M3.500 0 V3 M7.500 0 V3 M11.500 0 V3 M15.500 0 V3" stroke="#c0c0c0" stroke-width="1.300"/><path d="M2 5.500 Q8 5.500 10 10 Q12 14.500 17 15" fill="none" stroke="#c0c0c0" stroke-width="1.200"/></svg>

<!-- column header -->
<div class="a" style="left:0;top:612px;width:620px;height:1px;background:#111"></div>
<div class="a" style="left:0;top:613px;width:620px;height:19px;background:#2f2f2f"></div>
<div class="a" style="left:0;top:631px;width:620px;height:1px;background:#1a1a1a"></div>
<svg style="left:4px;top:618px" width="13" height="9"><use href="#eye"/></svg>
<svg style="left:19px;top:617px" width="12" height="11"><use href="#spk"/></svg>
<div class="a" style="left:35px;top:619px;width:7px;height:7px;border-radius:50%;background:#b4b4b4"></div>
<svg style="left:50px;top:617px" width="9" height="11" viewBox="0 0 10 12"><path d="M2.500 6 V3.600 A2.500 2.500 0 0 1 7.500 3.600 V6" fill="none" stroke="#b8b8b8" stroke-width="1.500"/><rect x="0.500" y="5.500" width="9" height="6.500" rx="0.800" fill="#b8b8b8"/><rect x="4.200" y="7.500" width="1.600" height="2.600" fill="#262626"/></svg>
<div class="a" style="left:66px;top:617px;width:1px;height:12px;background:#1a1a1a"></div>
<svg style="left:82px;top:616px" width="14" height="13" viewBox="0 0 14 13"><path d="M1 8.500 L8 1 H13 V6 L5.500 12.500Z" fill="#a8a8a8"/><circle cx="10.500" cy="3.500" r="1.200" fill="#2d2d2d"/></svg>
<div class="a" style="left:98px;top:617px;width:1px;height:12px;background:#1a1a1a"></div>
<div class="t" style="left:104px;top:617px;color:#c0c0c0;font-size:11px">#</div>
<div class="a" style="left:131px;top:617px;width:1px;height:12px;background:#1a1a1a"></div>
<div class="t" style="left:137px;top:617px;color:#c0c0c0">源名称</div>
<div class="a" style="left:351px;top:617px;width:1px;height:12px;background:#1a1a1a"></div>
<svg style="left:357px;top:618px" width="12" height="11"><use href="#shy"/></svg>
<svg style="left:372px;top:618px" width="11" height="11" viewBox="0 0 11 11"><circle cx="5.500" cy="5.500" r="2.200" fill="none" stroke="#c8c8c8" stroke-width="1.200"/><path d="M5.500 0 V2 M5.500 9 V11 M0 5.500 H2 M9 5.500 H11 M1.600 1.600 L3 3 M8 8 L9.400 9.400 M1.600 9.400 L3 8 M8 3 L9.400 1.600" stroke="#c8c8c8" stroke-width="1.100"/></svg>
<svg style="left:386px;top:618px" width="11" height="11" viewBox="0 0 11 11"><path d="M0.500 0.500 L10.500 10.500" stroke="#c8c8c8" stroke-width="1.400" stroke-dasharray="2.200 1.300"/></svg>
<div class="t" style="left:399px;top:615px;font-style:italic;font-weight:bold;font-size:13px;color:#c8c8c8;letter-spacing:-0.5px;line-height:15px">fx</div>
<svg style="left:416px;top:618px" width="12" height="11" viewBox="0 0 12 11"><rect x="0.500" y="0.500" width="11" height="10" fill="none" stroke="#c8c8c8"/><path d="M3 0 V11 M9 0 V11 M0 3.700 H12 M0 7.300 H12" stroke="#c8c8c8" stroke-width="0.900"/></svg>
<svg style="left:431px;top:617px" width="14" height="12" viewBox="0 0 14 12"><circle cx="5" cy="7.500" r="4" fill="#6a6a6a" stroke="#b0b0b0"/><circle cx="9" cy="4.500" r="4" fill="#8a8a8a" stroke="#c8c8c8"/></svg>
<svg style="left:446px;top:617px" width="13" height="13" viewBox="0 0 13 13"><circle cx="6.500" cy="6.500" r="5.500" fill="#111" stroke="#d8d8d8" stroke-width="1.200"/><path d="M2.600 10.400 A5.500 5.500 0 0 1 10.400 2.600Z" fill="#e8e8e8"/></svg>
<svg style="left:461px;top:617px" width="13" height="13" viewBox="0 0 13 13"><path d="M6.500 0.700 L12 3.500 V9.500 L6.500 12.300 L1 9.500 V3.500Z M1 3.500 L6.500 6.300 L12 3.500 M6.500 6.300 V12.300" fill="none" stroke="#c0c0c0" stroke-width="1.100"/></svg>
<div class="a" style="left:487px;top:617px;width:1px;height:12px;background:#1a1a1a"></div>
<div class="t" style="left:494px;top:617px;color:#c0c0c0">父级</div>
<div class="a" style="left:605px;top:617px;width:1px;height:12px;background:#1a1a1a"></div>
<!-- layer row -->
<div class="a" style="left:0;top:632px;width:605px;height:19px;background:#4c4c4c"></div>
<div class="a" style="left:605px;top:632px;width:15px;height:19px;background:#4c4c4c"></div><div class="a" style="left:0;top:651px;width:620px;height:1px;background:#1e1e1e"></div>
<div class="a" style="left:3px;top:634px;width:14px;height:13px;background:#1d1d1d"></div>
<div class="a" style="left:18px;top:634px;width:14px;height:13px;background:#1d1d1d"></div>
<div class="a" style="left:33px;top:634px;width:14px;height:13px;background:#1d1d1d"></div>
<div class="a" style="left:48px;top:634px;width:14px;height:13px;background:#1d1d1d"></div>
<svg style="left:4px;top:637px" width="13" height="9"><use href="#eye"/></svg>
<svg style="left:19px;top:636px" width="12" height="11"><use href="#spk"/></svg>
<svg style="left:71px;top:637px" width="8" height="9" viewBox="0 0 8 9"><path d="M0.500 0 V9 L8 4.500 Z" fill="#d8d8d8"/></svg>
<div class="a" style="left:84px;top:634px;width:15px;height:15px;background:#a7d3cf"></div>
<div class="t" style="left:105px;top:636px;color:#e6e6e6;font-family:'Liberation Serif',serif;font-weight:bold">1</div>
<svg style="left:136px;top:634px" width="15" height="16" viewBox="0 0 15 16"><path d="M2.500 0.500 H11 L14.500 4 V15.500 H2.500Z" fill="#f4f4f4" stroke="#9a9a9a" stroke-width="0.800"/><rect x="0" y="1.500" width="9" height="4" fill="#7a3cc0"/><circle cx="8" cy="11" r="3.600" fill="#2a9ad0"/><text x="8" y="13" font-size="5" fill="#fff" text-anchor="middle" font-family="Liberation Sans">58</text></svg>
<div class="a" style="left:153px;top:632px;width:198px;height:19px;background:#555;border:2px solid #a4a4a4"></div>
<div class="t" style="left:157px;top:636px;color:#f2f2f2;font-weight:bold;text-shadow:0 0 1px #000,1px 1px 0 #222,-1px -1px 0 #222,1px -1px 0 #222,-1px 1px 0 #222">医疗完整版.MOV</div>
<div class="a" style="left:355px;top:634px;width:16px;height:13px;background:#1d1d1d"></div>
<svg style="left:357px;top:636px" width="12" height="11"><use href="#shy"/></svg>
<div class="a" style="left:385px;top:634px;width:13px;height:13px;background:#1d1d1d"></div>
<svg style="left:386px;top:635px" width="11" height="13" viewBox="0 0 11 13"><path d="M1 12 L10 1" stroke="#e0e0e0" stroke-width="1.400"/></svg>
<div class="a" style="left:399px;top:634px;width:14px;height:13px;background:#1d1d1d"></div>
<div class="t" style="left:400px;top:634px;font-style:italic;font-weight:bold;font-size:13px;color:#c8c8c8;letter-spacing:-0.5px;line-height:15px">fx</div>
<div class="a" style="left:416px;top:634px;width:13px;height:13px;background:#1d1d1d"></div>
<div class="a" style="left:431px;top:634px;width:13px;height:13px;background:#1d1d1d"></div>
<div class="a" style="left:446px;top:634px;width:13px;height:13px;background:#1d1d1d"></div>
<div class="a" style="left:461px;top:634px;width:13px;height:13px;background:#1d1d1d"></div>
<svg style="left:491px;top:635px" width="13" height="13" viewBox="0 0 14 14"><path d="M7 7 Q7 5 8.500 5 Q10.500 5.500 10 8 Q9 10.500 6.500 10 Q3.500 9 4 6 Q5 2.500 8.500 3 Q12.500 4 12 8.500 Q10.500 12.500 6 12" fill="none" stroke="#b8b8b8" stroke-width="1.200"/></svg>
<div class="a" style="left:511px;top:632px;width:91px;height:19px;background:#262626"></div>
<div class="t" style="left:518px;top:635px;color:#e6e6e6">无</div><svg style="left:587px;top:639px" width="10" height="6" viewBox="0 0 10 6"><path d="M0 0 H10 L5.0 6 Z" fill="#dcdcdc"/></svg>
<!-- separators -->
<div class="a" style="left:620px;top:582px;width:2px;height:439px;background:#0c0c0c"></div>

<!-- track area -->
<div class="a" style="left:622px;top:577px;width:1293px;height:14px;background:#262626"></div>
<div class="a" style="left:622px;top:591px;width:1275px;height:20px;background:#252525"></div>
<div class="a" style="left:622px;top:583px;width:1274px;height:8px;background:#6c6c6c"></div>
<div class="a" style="left:657px;top:583px;width:4px;height:8px;background:#8a98a6"></div>
<div class="a" style="left:622px;top:582px;width:7px;height:10px;background:#3aa7e8;border-radius:5px 0 0 5px"></div><div class="a" style="left:625px;top:585px;width:2px;height:5px;background:#0d4a78"></div>
<div class="a" style="left:1891px;top:582px;width:7px;height:10px;background:#3aa7e8;border-radius:0 5px 5px 0"></div><div class="a" style="left:1892px;top:585px;width:2px;height:5px;background:#0d4a78"></div>
<div class="a" style="left:630px;top:606px;width:1px;height:5px;background:#7a7a7a"></div><div class="a" style="left:622px;top:592px;width:24px;height:14px;overflow:hidden"><div class="t" style="left:-3px;top:1px;color:#b8b8b8;font-size:10px">0:00s</div></div><div class="a" style="left:680px;top:606px;width:1px;height:5px;background:#7a7a7a"></div><div class="t" style="left:671px;top:593px;color:#b8b8b8;font-size:10px">01s</div><div class="a" style="left:730px;top:606px;width:1px;height:5px;background:#7a7a7a"></div><div class="t" style="left:721px;top:593px;color:#b8b8b8;font-size:10px">02s</div><div class="a" style="left:781px;top:606px;width:1px;height:5px;background:#7a7a7a"></div><div class="t" style="left:772px;top:593px;color:#b8b8b8;font-size:10px">03s</div><div class="a" style="left:831px;top:606px;width:1px;height:5px;background:#7a7a7a"></div><div class="t" style="left:822px;top:593px;color:#b8b8b8;font-size:10px">04s</div><div class="a" style="left:882px;top:606px;width:1px;height:5px;background:#7a7a7a"></div><div class="t" style="left:873px;top:593px;color:#b8b8b8;font-size:10px">05s</div><div class="a" style="left:932px;top:606px;width:1px;height:5px;background:#7a7a7a"></div><div class="t" style="left:923px;top:593px;color:#b8b8b8;font-size:10px">06s</div><div class="a" style="left:982px;top:606px;width:1px;height:5px;background:#7a7a7a"></div><div class="t" style="left:973px;top:593px;color:#b8b8b8;font-size:10px">07s</div><div class="a" style="left:1033px;top:606px;width:1px;height:5px;background:#7a7a7a"></div><div class="t" style="left:1024px;top:593px;color:#b8b8b8;font-size:10px">08s</div><div class="a" style="left:1083px;top:606px;width:1px;height:5px;background:#7a7a7a"></div><div class="t" style="left:1074px;top:593px;color:#b8b8b8;font-size:10px">09s</div><div class="a" style="left:1134px;top:606px;width:1px;height:5px;background:#7a7a7a"></div><div class="t" style="left:1125px;top:593px;color:#b8b8b8;font-size:10px">10s</div><div class="a" style="left:1184px;top:606px;width:1px;height:5px;background:#7a7a7a"></div><div class="t" style="left:1175px;top:593px;color:#b8b8b8;font-size:10px">11s</div><div class="a" style="left:1234px;top:606px;width:1px;height:5px;background:#7a7a7a"></div><div class="t" style="left:1225px;top:593px;color:#b8b8b8;font-size:10px">12s</div><div class="a" style="left:1285px;top:606px;width:1px;height:5px;background:#7a7a7a"></div><div class="t" style="left:1276px;top:593px;color:#b8b8b8;font-size:10px">13s</div><div class="a" style="left:1335px;top:606px;width:1px;height:5px;background:#7a7a7a"></div><div class="t" style="left:1326px;top:593px;color:#b8b8b8;font-size:10px">14s</div><div class="a" style="left:1386px;top:606px;width:1px;height:5px;background:#7a7a7a"></div><div class="t" style="left:1377px;top:593px;color:#b8b8b8;font-size:10px">15s</div><div class="a" style="left:1436px;top:606px;width:1px;height:5px;background:#7a7a7a"></div><div class="t" style="left:1427px;top:593px;color:#b8b8b8;font-size:10px">16s</div><div class="a" style="left:1486px;top:606px;width:1px;height:5px;background:#7a7a7a"></div><div class="t" style="left:1477px;top:593px;color:#b8b8b8;font-size:10px">17s</div><div class="a" style="left:1537px;top:606px;width:1px;height:5px;background:#7a7a7a"></div><div class="t" style="left:1528px;top:593px;color:#b8b8b8;font-size:10px">18s</div><div class="a" style="left:1587px;top:606px;width:1px;height:5px;background:#7a7a7a"></div><div class="t" style="left:1578px;top:593px;color:#b8b8b8;font-size:10px">19s</div><div class="a" style="left:1638px;top:606px;width:1px;height:5px;background:#7a7a7a"></div><div class="t" style="left:1629px;top:593px;color:#b8b8b8;font-size:10px">20s</div><div class="a" style="left:1688px;top:606px;width:1px;height:5px;background:#7a7a7a"></div><div class="t" style="left:1679px;top:593px;color:#b8b8b8;font-size:10px">21s</div><div class="a" style="left:1738px;top:606px;width:1px;height:5px;background:#7a7a7a"></div><div class="t" style="left:1729px;top:593px;color:#b8b8b8;font-size:10px">22s</div><div class="a" style="left:1789px;top:606px;width:1px;height:5px;background:#7a7a7a"></div><div class="t" style="left:1780px;top:593px;color:#b8b8b8;font-size:10px">23s</div><div class="a" style="left:1839px;top:606px;width:1px;height:5px;background:#7a7a7a"></div><div class="t" style="left:1830px;top:593px;color:#b8b8b8;font-size:10px">24s</div><div class="a" style="left:1890px;top:606px;width:1px;height:5px;background:#7a7a7a"></div><div class="t" style="left:1881px;top:593px;color:#b8b8b8;font-size:10px">25s</div>
<div class="a" style="left:622px;top:611px;width:1275px;height:1px;background:#111"></div>
<div class="a" style="left:622px;top:612px;width:1275px;height:15px;background:#5c5c5c"></div>
<div class="a" style="left:622px;top:627px;width:1275px;height:5px;background:#2e2e2e"></div>
<div class="a" style="left:1700px;top:628px;width:190px;height:3px;background:#2cc02c"></div>
<div class="a" style="left:623px;top:612px;width:6px;height:16px;background:#3aa7e8;border-radius:3px 0 0 3px"></div><div class="a" style="left:625px;top:615px;width:1px;height:10px;background:#0d4a78"></div>
<div class="a" style="left:1891px;top:612px;width:6px;height:16px;background:#3aa7e8;border-radius:0 3px 3px 0"></div><div class="a" style="left:1894px;top:615px;width:1px;height:10px;background:#0d4a78"></div>
<div class="a" style="left:622px;top:632px;width:1275px;height:19px;background:#4c4c4c"></div><div class="a" style="left:622px;top:651px;width:1275px;height:1px;background:#2a2a2a"></div>
<div class="a" style="left:623px;top:634px;width:1077px;height:16px;background:linear-gradient(#a3c9c5,#94bfbb 60%,#86b3af);border-left:1px solid #c8e0de"></div>
<svg style="left:1695px;top:634px" width="5" height="5" viewBox="0 0 7 7"><path d="M0 0 H7 V7Z" fill="#1c2a2a"/></svg>
<div class="a" style="left:622px;top:652px;width:1275px;height:369px;background:#333"></div><div class="a" style="left:622px;top:652px;width:7px;height:369px;background:#2b2b2b"></div>
<div class="a" style="left:1897px;top:577px;width:18px;height:75px;background:#262626"></div><div class="a" style="left:1897px;top:652px;width:18px;height:384px;background:#1c1c1c"></div><div class="a" style="left:1891px;top:652px;width:6px;height:369px;background:#3a3a3a"></div>
<svg style="left:1900px;top:614px" width="13" height="15" viewBox="0 0 13 15"><path d="M0.700 0.700 H12.300 V8 L6.500 14 L0.700 8Z" fill="#5a5a5a" stroke="#c8c8c8" stroke-width="1.200"/></svg>
<svg style="left:1899px;top:634px" width="15" height="14" viewBox="0 0 15 14"><circle cx="5.500" cy="5.500" r="4.500" fill="#8a8a8a" stroke="#d0d0d0"/><rect x="6.500" y="4.500" width="8" height="6" fill="#333" stroke="#d0d0d0"/><path d="M1 13 L5 6 L9 13Z" fill="#555" stroke="#d0d0d0" stroke-width="0.900"/></svg>
<!-- playhead -->
<div class="a" style="left:659px;top:600px;width:1px;height:421px;background:#3aa0e0"></div>
<svg style="left:653px;top:597px" width="13" height="13.500" viewBox="0 0 13 12" preserveAspectRatio="none"><path d="M0.500 1.500 Q0.500 0.500 1.500 0.500 H11.500 Q12.500 0.500 12.500 1.500 V5.500 L6.500 11.500 L0.500 5.500Z" fill="#42b6ee" stroke="#1d7fc0" stroke-width="0.800"/><path d="M4 2.500 V5 M6.500 2.500 V10 M9 2.500 V5" stroke="#0d4a78" stroke-width="1"/></svg>
<!-- bottom bar -->
<div class="a" style="left:0;top:1020px;width:1897px;height:1px;background:#0c0c0c"></div>
<div class="a" style="left:0;top:1021px;width:620px;height:15px;background:#1f1f1f"></div>
<div class="a" style="left:355px;top:1021px;width:133px;height:15px;background:#292929"></div>
<div class="a" style="left:622px;top:1021px;width:108px;height:15px;background:#222"></div>
<div class="a" style="left:730px;top:1021px;width:1167px;height:15px;background:#161616"></div>
<div class="a" style="left:1897px;top:1021px;width:18px;height:15px;background:#242424"></div>
<svg style="left:4px;top:1023px" width="13" height="13" viewBox="0 0 13 13"><rect x="0.600" y="0.600" width="8" height="8" fill="none" stroke="#36a3d9" stroke-width="1.200"/><rect x="2.800" y="2.800" width="8" height="8" fill="#1f1f1f" stroke="#36a3d9" stroke-width="1.200"/><rect x="5" y="5" width="7.500" height="7.500" fill="#36a3d9"/></svg>
<svg style="left:21px;top:1022px" width="14" height="14" viewBox="0 0 14 14"><circle cx="5.500" cy="5.500" r="4.500" fill="none" stroke="#c8c8c8" stroke-width="1.200"/><rect x="5.500" y="5.500" width="7.500" height="7.500" fill="#1f1f1f" stroke="#c8c8c8" stroke-width="1.200"/></svg>
<div class="t" style="left:40px;top:1022px;color:#c8c8c8;font-size:12px;font-weight:bold;letter-spacing:0.5px">{}</div>
<div class="t" style="left:386px;top:1022px;color:#dcdcdc;font-size:11px;line-height:13px">切换开关/模式</div>
<svg style="left:626px;top:1026px" width="11" height="6" viewBox="0 0 11 6"><path d="M0 6 L3.500 2 L5 3.500 L7 1 L11 6Z" fill="#b8b8b8"/></svg>
<div class="a" style="left:658px;top:1029px;width:40px;height:1px;background:#3a3a3a"></div>
<svg style="left:648px;top:1024px" width="10" height="12" viewBox="0 0 10 12"><path d="M0 4 L5 0 L10 4 V12 H0Z" fill="#8a8a8a"/></svg>
<svg style="left:706px;top:1024px" width="19" height="9" viewBox="0 0 19 9"><path d="M0 9 L5 3 L7.500 5.500 L11 0.500 L14 4 L15.500 2.500 L19 9Z" fill="#b8b8b8"/></svg>
<!-- green badge -->
<div class="a" style="left:1897px;top:843px;width:18px;height:46px;overflow:hidden"><div class="a" style="left:1px;top:0;width:46px;height:46px;border-radius:50%;background:radial-gradient(circle at 50% 30%,#5fdc7a,#2fb84e 60%,#1f9a3e);border:1.500px solid #e4f4e8"></div><div class="t" style="left:9px;top:16px;color:#fff;font-size:11px">28</div></div>
<!-- watermark -->
<div class="t" style="left:1422px;top:978px;height:44px;line-height:44px;font-size:40px;color:#e8e8e8;text-shadow:1px 2px 1px #1a1a1a;letter-spacing:-0.65px">头条号 / 视频制作那些事儿</div>

<!--TIMELINE-->
<div class="a" style="left:0;top:67px;width:1915px;height:4px;background:#000"></div>
</body>
</html>
